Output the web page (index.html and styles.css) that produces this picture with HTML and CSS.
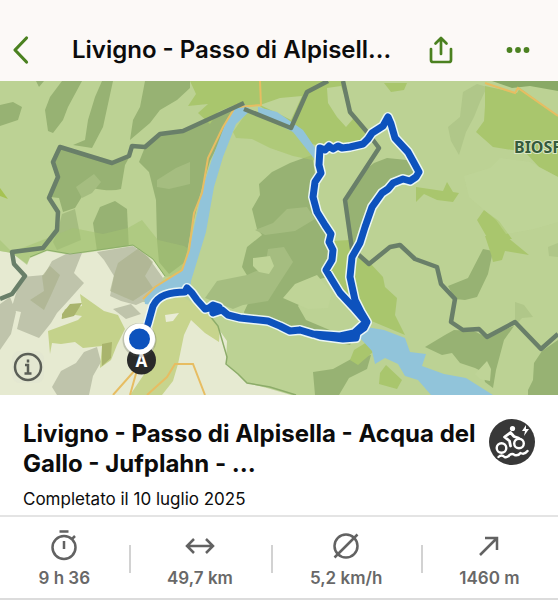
FILE: index.html
```html
<!DOCTYPE html>
<html lang="it">
<head>
  <meta charset="UTF-8">
  <meta name="viewport" content="width=device-width, initial-scale=1.0">
  <title>Livigno - Passo di Alpisella</title>
  <link rel="stylesheet" href="styles.css">
</head>
<body>
  <header class="topbar">
    <button class="icon-btn" aria-label="Indietro">
      <svg width="20" height="30" viewBox="0 0 20 30"><path d="M14.500 3 3 15l11.500 12" stroke-width="3.200"/></svg>
    </button>
    <h1>Livigno - Passo di Alpisell...</h1>
    <button class="icon-btn" aria-label="Condividi">
      <svg width="26" height="30" viewBox="0 0 26 30"><path d="M3 14v11q0 2 2 2h16q2 0 2-2V14M13 19V3M7.500 8.500 13 3l5.500 5.500" stroke-width="2.700"/></svg>
    </button>
    <button class="icon-btn more" aria-label="Altro">
      <svg class="solid" width="24" height="8" viewBox="0 0 24 8"><circle cx="3.500" cy="4" r="2.900"/><circle cx="12" cy="4" r="2.900"/><circle cx="20.500" cy="4" r="2.900"/></svg>
    </button>
  </header>

  <main>
    <section class="map" aria-label="Mappa del percorso">
      <svg class="map-art" viewBox="0 81 558 314" preserveAspectRatio="xMidYMid slice">
        <rect y="81" width="558" height="314" fill="#bcd294"/>

        <!-- Forest -->
        <g fill="#97b273">
          <path d="M62 81 50 97l-5 13 3 21 5 2 10-13 5-13 14-26zM102 81l-7 16-7 23-3 20-12 5 19 3 11-21 10-46zM145 81l-5 26-7 13-3 20 20-17 10-13 17-10 13-12v-7zM0 105l13-3 9 5-4 13-18 6zM36 81h8l-5 6z"/>
          <path d="m60 147 52 16 18-7-5 9-4 24q-10 3-29-1l-4 5-5 2-8 13-12 4-4-14-9-1 8-20-4-15zM145 147l17-13 25-3 45-23 3 3-25 50-10 34-10 41-5 26-16 12-10-12-2-22-1-40-7-28-10-10z"/>
          <path d="m93 223 7-16 15-6 12 8 2 42H97z"/>
          <path d="m259 184 13-12 18-9 22-8 4 25-3 17 4 15 12 20 2 25-6 12 2 8-14 4-15 25 8 14 26 11 22 8-4 6-35-7-40-14-29-2-2-10 7-15-3-20-6-10 5-20 15-12-5-6-5-20 8-14z"/>
          <path d="m345 200 15-26 14-11 13-5 20 2 10 11-7 9-7-1-10 4-11 10-10 14-7 20-5 16-8 10z"/>
          <path d="m448 286 20-8 15-29 10 2-5 23-11 23-12 3-10-1zM425 347l20-12 9-5 20 1 12 6 28-11-10 14-8 30-3 18-8-6-2-10-8-4-15-5-8-10-10 2zM558 340l-16 11-8 12-1 17-5 10v5h30zM313 372l20-3 20-11 18-3-4 14-18 9-10 17h-24z"/>
        </g>
        <g fill="#a5bd80">
          <path d="m157 180 19-12 14-6v22l-21 5-12-2zM76 187l18-13 7 8-9 11-10 5zM62 214l13-5 6 31-24 10-4-8 5-12zM205 298l12-17 30-6 18-8 3-18 16-2 9 15-13 20-12 19-25 4-10 4zM255 230l18-7 14-14 20-2 8 12-20 12-30 4z"/>
          <path d="m463 92 14-8 10 3-7 15-6 15-8 15-7 23-8-14-3-14 12-10zM548 247l10-4v14l-9-1zM515 302l9 3 9 12-11 1-7 8z" opacity=".55"/>
        </g>

        <!-- Meadows -->
        <g fill="#a9c66d">
          <path d="M190 81h138l-22 11-15 36-31-22-26-1-16 7-8 12-12-11 10-9-20 2 8-12zM329 81h15l6 31 18 20-8 12-40 2-8-2-18-17 13-34z"/>
          <path d="m233 132 14-20 43 17 21 19 6 13-24-5-23-8-18-9-16-1z" opacity=".7"/>
          <path d="m485 86 32 7 3-5 38 28v61l-19-10-14-15-32-5-17-15 8-11 1-15zM384 83h23l-3 7-13 2zM416 187l27 4 4-9 6 10 6 1-6 9-16-2-13-6-8 8zM477 220l7-10 15 11 13 18-12-1-12 1zM485 236l22 1 22 18-24-4-3 9-9 2-2-8z"/>
          <path d="m332 241 18-1 3 15-3 25 5 23-22-24-8-10 7-10zM358 257l12 6 13 14 2 10 12 11-2 17 10 20-36-15-12-25-6-18zM380 373l6-8 16 15-5 9-18-5zM354 350l13-8 6 10-15 13-8-5z"/>
        </g>
        <g fill="#bfd497">
          <path d="m327 88 14-2 7 20 5 13-7 8-9-10-9-14zM253 258l17-2 4 10-5 8-10-2-6-6zM283 298l12-14 22-9 15 18-4 15-20 1z"/>
          <path d="m475 374 12-13 4 8-1 12-10-2zM260 105l20-7 22-2-11 24-12-6z"/>
        </g>
        <path d="M492 81h66v10l-28-5-18 2z" fill="#89a966"/>
        <path d="m464 176 26-8 10-10 30 4 28 15v45l-24 7-28 5-10-14-27-23z" fill="#c2d79b" opacity=".45"/>
        <path d="M0 188 8 199l-8-3z" fill="#a6c352"/>

        <!-- Open ground -->
        <path d="m0 251 12 2 15 11 3-7 17-7 23 4 63-9 20 14 12 17-20 18-2 8 48 2 20 14 16 23-1 22 21 20 20 5 24 7H0z" fill="#e6ead1"/>
        <path d="m0 240 12 12 41-16 20-8 30 6 25-6 14-8 16 20 26 6 10 7-4 20-25 4-12-17-20-14-63 9-23-4-17 7-3 7-15-12-12-2z" fill="#a4c272" opacity=".55"/>
        <g fill="#bfc4ab">
          <path d="m22 277 22-2 8-14 16-8h14l-8 20 10 10-16 18-11 12-6 10-12 15-22-9 4-17-10-2 6-20zM0 304l10-7 6 15-5 22-11 16z"/>
          <path d="m97 252 36-6 15 11 15 21-7 18-20 9-15-4-11-5 4-20-10-16z"/>
          <path d="m84 352 13-5 4 15-8 14-4 19H57l-5-8 9-16 15-8zM113 309l18-5 10 10-15 5z"/>
        </g>
        <g fill="#a9b18a" opacity=".65">
          <path d="m118 263 21-15 14 14-8 14 8 12-20 13-23-10 4-16zM30 300l14-9-2-15 8-10 10 9-8 18-8 17z"/>
        </g>
        <path d="m48 331 30-11 4-4-13-2-8 5 4-10 17-3-2-12 24 17 14 4 7 14-8 16-6 15-11 8 2-22-19 2-8-6-14 2-9-1-2 11z" fill="#c4d28b"/>
        <path d="m62 314 8-10 12-1-8 13-12 3zM102 344l10-2-1 16-9 8z" fill="#a9b46d"/>
        <path d="m152 304 30-8 15 10 13 9 10 13-1 14-14-9-14-13-7 15-6 29-5 17-11 14h-32l17-25 9-30-6-20z" fill="#c7d48d"/>
        <path d="m165 315 14-2-6 8-7 1z" fill="#e9ecd5"/>
        <path d="m210 316 8 10 9 31-1 7 12 10 9 9 23 4 26 8" fill="none" stroke="#8cac69" stroke-width="1.500"/>
        <path d="m30 257 17-7 23 4 63-9 20 14 12 17" fill="none" stroke="#8bae68"/>

        <!-- Water -->
        <g fill="#91c4da">
          <path d="m237 105 6-2 8 7-15 14-13 33-9 30-8 45-15 49-1 11-22 4-16 9-7-1-1-7 17-15 20-10 8-20 5-25 9-40 9-28 15-40z"/>
          <path d="m258 107 19 5 26 18 15 22-2 9-23-29-35-18z"/>
          <path d="m366 327 18 3 21 8 5 14 16 2-4 12 22 8 22 4 27 17h-62l-13-15-13-4-7-12-13-6-10 6-3-13-12-13z"/>
        </g>

        <!-- Roads -->
        <g fill="none" stroke="#e7bd62" stroke-width="2">
          <path d="M237 104 223 127l-15 31-6 35-8 20-5 37-7 20-27 17-12 12M260 81l1 24-24 2M485 83l30 10 3-5 40 28M113 395l31-35M130 395l7-25M147 395l20-18 8-13h18l12 31"/>
        </g>

        <!-- Borders -->
        <g fill="none" stroke="#697f69" stroke-width="4.500" stroke-linejoin="round">
          <path d="m244 103-61 28-23 3-15 13-13-1-3 10-17 7-52-16-7 15 5 15-9 21 9 14-1 18-14 18-31 4 2 12 11 12-13 18-12 5"/>
          <path d="m244 109 47 19 16-36 21-11"/>
          <path d="M343 81 350 112 367 132 379 148 345 200 352 249 369 264 390 247 400 245 415 259 437 267 441 284 455 299 451 322 463 330 479 329 487 337 515 322 541 349 558 334"/>
        </g>

        <!-- Track, drawn twice for the white casing -->
        <defs>
          <path id="track" d="M142 339 148 324 153 306Q157 298 165 295 174 292 185 292L187 288 192 293 197 300 205 309 209 308 213 305 219 307 213 313 222 310 228 315 240 318 268 321 280 326 290 331 300 330 313 334 340 336 354 333 366 322 353 307 340 293 332 280 326 270 332 260 333 250 329 242 331 234 325 225 317 212 313 197 315 182 321 173 319 165 320 148 325 150 329 146 333 149 338 146 342 148 350 147 363 144 368 139 372 133 383 126 388 117 391 124 395 138 408 152 413 161 419 172 416 177 410 181 403 179 393 183 388 189 382 193 372 207 365 227 360 243 352 257 350 277 355 300 361 312 367 322 364 328 357 333 356 338 343 339 320 336 300 330"/>
        </defs>
        <use href="#track" class="track casing"/>
        <use href="#track" class="track"/>

        <text class="place" x="514" y="153">BIOSF</text>

        <circle cx="141.500" cy="360" r="14.500" fill="#292a29"/>
        <text class="stop" x="141.500" y="367" text-anchor="middle">A</text>
        <circle cx="139.500" cy="340" r="17" fill="#4b514c" opacity=".25"/>
        <circle cx="139.500" cy="339" r="13" fill="#0d52bd" stroke="#fff" stroke-width="5"/>
      </svg>
      <button class="info" aria-label="Informazioni">
        <svg width="32" height="32" viewBox="0 0 32 32"><circle cx="16" cy="16" r="13"/><path d="M13 14h3v9M12.500 22.500h7M16 8.500v3"/></svg>
      </button>
    </section>

    <section class="summary">
      <div>
        <h2>Livigno - Passo di Alpisella - Acqua del Gallo - Jufplahn - ...</h2>
        <p>Completato il 10 luglio 2025</p>
      </div>
      <svg class="sport" width="46" height="46" viewBox="0 0 46 46" role="img" aria-label="E-bike">
        <circle cx="23" cy="23" r="23" fill="#383838"/>
        <g fill="none" stroke="#fff" stroke-width="2.400" stroke-linejoin="round" stroke-linecap="round">
          <circle cx="12.500" cy="29" r="4.800"/>
          <circle cx="30" cy="24.500" r="4.800"/>
          <path d="m21.500 27-1-5-5-4 6-4.500 3.500 4 4.500 1.500" stroke-width="2.800"/>
          <path d="M9.500 38q3-3 6 0 3 1 5-2 3-2 5 0 4 1 6-2 4 2 7-2"/>
        </g>
        <circle cx="23.500" cy="9.500" r="2.600" fill="#fff"/>
        <path d="m37 6-4 6h3l-1 5 5-7h-3z" fill="#fff"/>
      </svg>
    </section>

    <ul class="stats">
      <li>
        <svg width="32" height="32" viewBox="0 0 32 32"><circle cx="16" cy="18.500" r="11.500"/><path d="M16 12v8M11.500 2.500h9M24 10l3-3"/></svg>
        <span>9 h 36</span>
      </li>
      <li>
        <svg width="32" height="32" viewBox="0 0 32 32"><path d="M3.500 17h25M10 10l-7 7 7 7M22 10l7 7-7 7"/></svg>
        <span>49,7 km</span>
      </li>
      <li>
        <svg width="32" height="32" viewBox="0 0 32 32"><circle cx="16" cy="17" r="11.500"/><path d="M4.500 28.500l23-23"/></svg>
        <span>5,2 km/h</span>
      </li>
      <li>
        <svg width="32" height="32" viewBox="0 0 32 32"><path d="M7 26 23.500 9.500M12 9h12v12"/></svg>
        <span>1460 m</span>
      </li>
    </ul>
  </main>
</body>
</html>
```

FILE: styles.css
```css
* {
  box-sizing: border-box;
}

body {
  margin: 0;
  background: #fff;
  color: #0c0c0c;
  font-family: Inter, "Liberation Sans", sans-serif;
}

h1, h2, p, ul {
  margin: 0;
  padding: 0;
}

button {
  padding: 0;
  border: none;
  background: none;
  cursor: pointer;
}

svg {
  display: block;
}

.topbar {
  display: flex;
  align-items: center;
  height: 81px;
  padding: 18px 28px 0 12px;
  background: #fcf9f7;
}

.topbar h1 {
  flex: 1;
  padding-left: 40px;
  font-size: 24px;
  font-weight: 600;
  line-height: 32px;
  white-space: nowrap;
}

.icon-btn svg {
  fill: none;
  stroke: #4b8120;
  stroke-linecap: round;
  stroke-linejoin: round;
}

.icon-btn .solid {
  fill: #4b8120;
  stroke: none;
}

.more {
  margin-left: 52px;
}

.map {
  position: relative;
}

.map-art {
  width: 100%;
  aspect-ratio: 558 / 314;
}

.track {
  fill: none;
  stroke: #0d52bd;
  stroke-width: 7;
  stroke-linecap: round;
  stroke-linejoin: round;
}

.casing {
  stroke: #eaf6f6;
  stroke-width: 10;
}

.place {
  fill: #345a3c;
  stroke: #dce8c5;
  stroke-width: 2px;
  paint-order: stroke;
  font: 700 16px "Noto Sans", sans-serif;
}

.stop {
  fill: #fff;
  font: 700 17px "Noto Sans", sans-serif;
}

.info {
  position: absolute;
  left: 12px;
  bottom: 12px;
  border-radius: 8px;
  background: rgba(225, 229, 209, 0.6);
}

.info svg {
  fill: none;
  stroke: #5b5f57;
  stroke-width: 2.5;
}

.summary {
  display: flex;
  justify-content: space-between;
  padding: 24px 23px 4px;
}

.summary h2 {
  font-size: 24px;
  font-weight: 700;
  line-height: 30px;
}

.summary p {
  margin-top: 8px;
  font-size: 17px;
  line-height: 24px;
}

.sport {
  flex: none;
}

.stats {
  display: flex;
  padding: 12px 0 8px;
  border-top: 2px solid #e4e4e4;
  border-bottom: 2px solid #dcdcdc;
  color: #686868;
  font-size: 17px;
  font-weight: 600;
  line-height: 24px;
  list-style: none;
}

.stats li {
  display: flex;
  flex: 1 1 auto;
  flex-direction: column;
  align-items: center;
  gap: 5px;
  background: linear-gradient(#d2d2d2, #d2d2d2) left 16px / 2px 28px no-repeat;
}

.stats li:first-child {
  background: none;
}

.stats svg {
  fill: none;
  stroke: #626262;
  stroke-width: 2.5;
}
```
